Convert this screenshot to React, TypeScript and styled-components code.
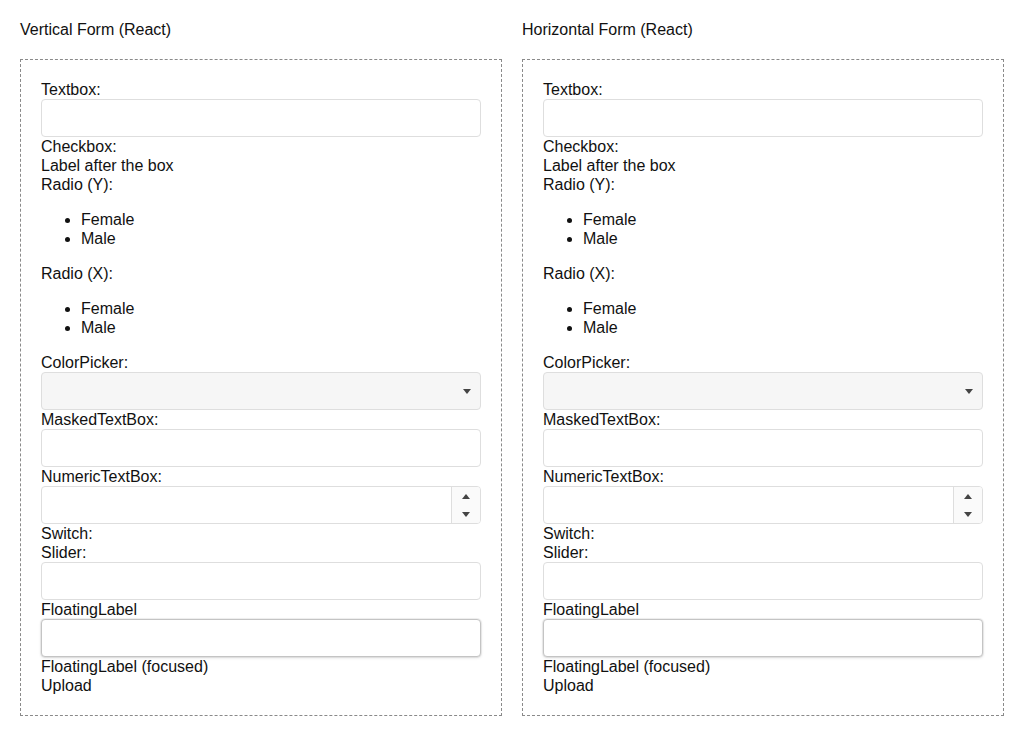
import React from "react";
import styled, { createGlobalStyle } from "styled-components";

const GlobalStyle = createGlobalStyle`
	html, body {
		margin: 0;
		padding: 0;
		background: #ffffff;
	}
	body {
		font-family: "Liberation Sans", Arial, sans-serif;
		font-size: 16px;
		color: #111111;
	}
`;

const Page = styled.div`
	display: grid;
	grid-template-columns: 1fr 1fr;
	column-gap: 20px;
	padding: 20px;
`;

const Column = styled.div`
	display: flex;
	flex-direction: column;
`;

const Title = styled.div`
	line-height: 19px;
	margin-bottom: 20px;
`;

const Panel = styled.div`
	border: 1px dashed #8a8a8a;
	padding: 20px;
	display: flex;
	flex-direction: column;
`;

const Label = styled.div`
	line-height: 19px;
`;

const List = styled.ul`
	margin: 16px 0;
	padding-left: 40px;
	line-height: 19px;
`;

const Input = styled.div<{ $focused?: boolean; $filled?: boolean }>`
	height: 38px;
	box-sizing: border-box;
	border: 1px solid ${(p) => (p.$focused ? "#c4c4c4" : "#dedede")};
	border-radius: 4px;
	background: ${(p) => (p.$filled ? "#f6f6f6" : "#ffffff")};
	box-shadow: ${(p) => (p.$focused ? "0 0 0 1px rgba(0, 0, 0, 0.05), 0 1px 3px rgba(0, 0, 0, 0.12)" : "none")};
	display: flex;
	justify-content: flex-end;
	align-items: stretch;
`;

const PickerButton = styled.div`
	width: 27px;
	display: flex;
	align-items: center;
	justify-content: center;
`;

const Spinner = styled.div`
	width: 28px;
	border-left: 1px solid #dedede;
	background: #fafafa;
	border-radius: 0 3px 3px 0;
	display: flex;
	flex-direction: column;
`;

const SpinHalf = styled.div`
	flex: 1;
	display: flex;
	align-items: center;
	justify-content: center;
`;

const Caret = ({ up }: { up?: boolean }) => (
	<svg width="8" height="5" viewBox="0 0 8 5">
		<path d={up ? "M0 5 L4 0 L8 5 Z" : "M0 0 L8 0 L4 5 Z"} fill="#444444" />
	</svg>
);

const FormPanel = ({ title }: { title: string }) => (
	<Column>
		<Title>{title}</Title>
		<Panel>
			<Label>Textbox:</Label>
			<Input />
			<Label>Checkbox:</Label>
			<Label>Label after the box</Label>
			<Label>Radio (Y):</Label>
			<List>
				<li>Female</li>
				<li>Male</li>
			</List>
			<Label>Radio (X):</Label>
			<List>
				<li>Female</li>
				<li>Male</li>
			</List>
			<Label>ColorPicker:</Label>
			<Input $filled>
				<PickerButton>
					<Caret />
				</PickerButton>
			</Input>
			<Label>MaskedTextBox:</Label>
			<Input />
			<Label>NumericTextBox:</Label>
			<Input>
				<Spinner>
					<SpinHalf>
						<Caret up />
					</SpinHalf>
					<SpinHalf>
						<Caret />
					</SpinHalf>
				</Spinner>
			</Input>
			<Label>Switch:</Label>
			<Label>Slider:</Label>
			<Input />
			<Label>FloatingLabel</Label>
			<Input $focused />
			<Label>FloatingLabel (focused)</Label>
			<Label>Upload</Label>
		</Panel>
	</Column>
);

const App = () => (
	<>
		<GlobalStyle />
		<Page>
			<FormPanel title="Vertical Form (React)" />
			<FormPanel title="Horizontal Form (React)" />
		</Page>
	</>
);

export default App;
